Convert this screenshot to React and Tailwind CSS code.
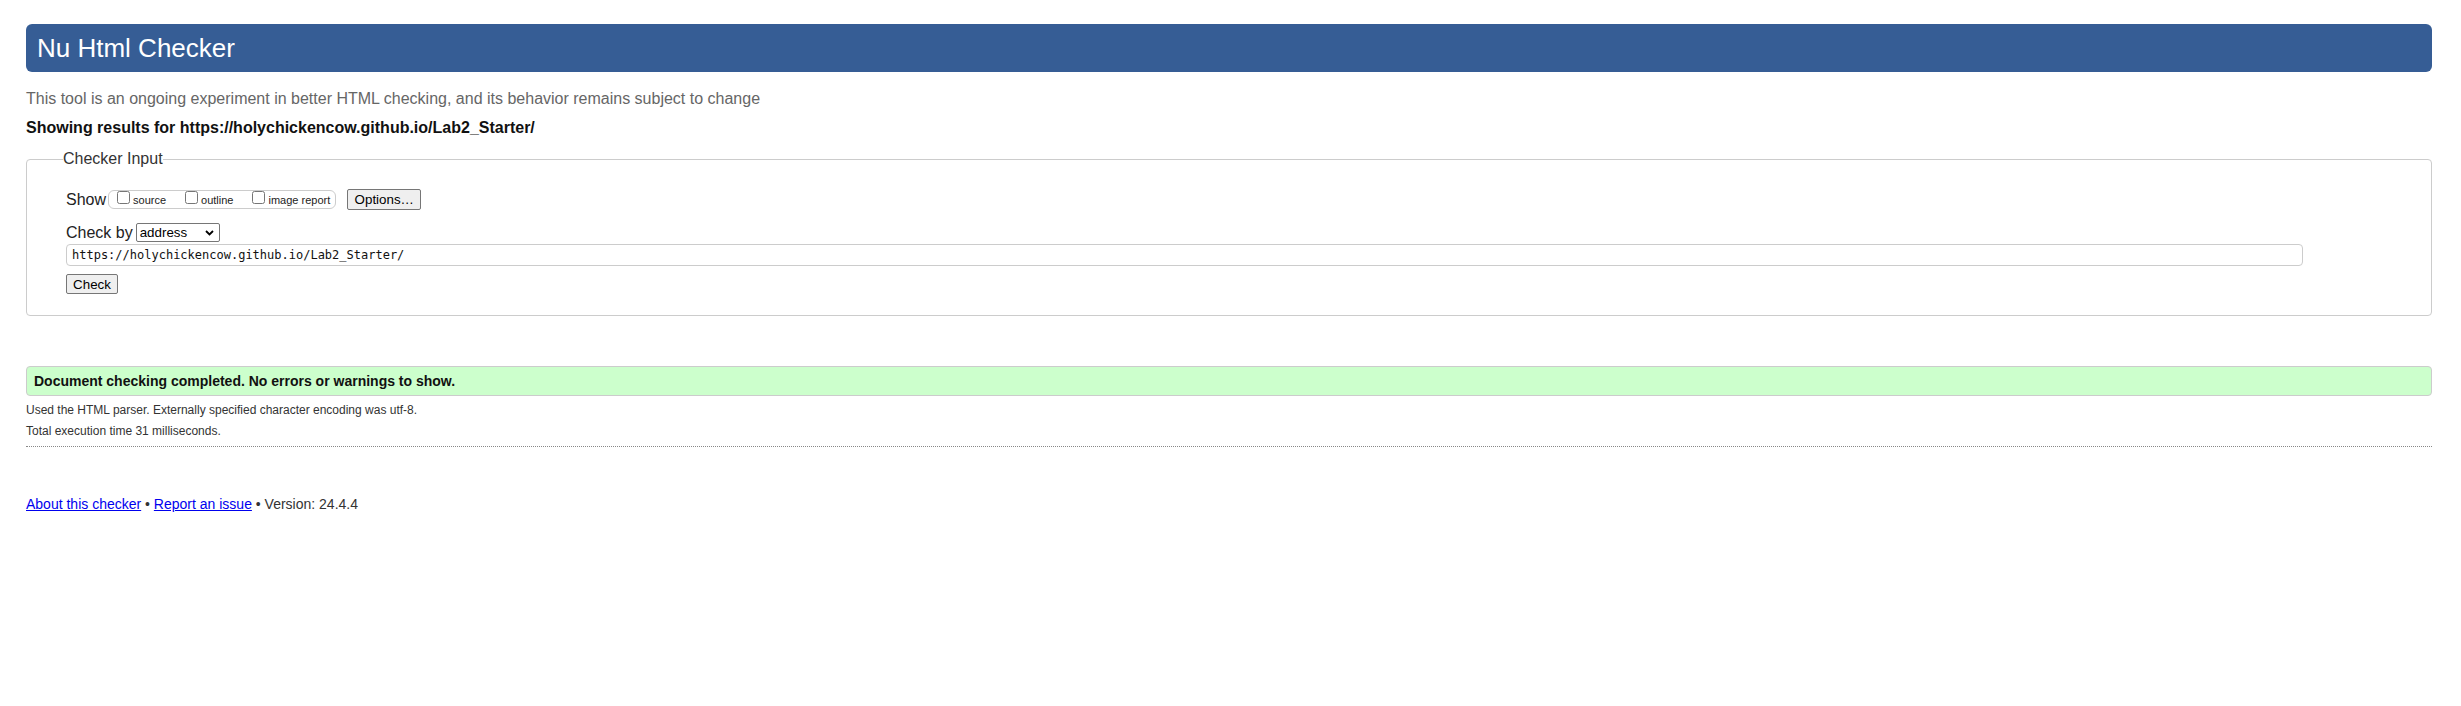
import React from "react";

function Cb({ label, className = "" }) {
  return (
    <label className={"flex items-start " + className}>
      <input type="checkbox" className="m-0 h-[13px] w-[13px]" />
      <span className="ml-[3px] pt-[4px] text-[11px] leading-[11px] text-[#222]">{label}</span>
    </label>
  );
}

export default function App() {
  return (
    <div className="min-h-[706px] bg-white pt-[24px] pl-[26px] pr-[29px] font-['Liberation_Sans',Arial,sans-serif] text-[16px] text-[#222]">
      <h1 className="flex h-[48px] items-center rounded-[6px] bg-[#365d95] pl-[11px] text-[26px] font-normal leading-[30px] text-white">
        Nu Html Checker
      </h1>
      <p className="mt-[18px] text-[16px] leading-[18px] text-[#666]">
        This tool is an ongoing experiment in better HTML checking, and its behavior remains subject to change
      </p>
      <p className="mt-[11px] text-[16px] font-bold leading-[18px] text-[#111]">
        Showing results for https://holychickencow.github.io/Lab2_Starter/
      </p>
      <fieldset className="mt-[13px] rounded-[4px] border border-[#cccccc] pt-[21px] pb-[21px] pl-[39px] pr-[39px]">
        <legend className="ml-[-3px] p-0 text-[16px] leading-[18px] text-[#333]">Checker Input</legend>
        <div className="flex h-[21px] items-center">
          <span className="leading-[18px] text-[#222]">Show</span>
          <div className="ml-[2px] flex h-[19px] items-start rounded-[6px] border border-[#cccccc] pl-[8px] pr-[5px]">
            <Cb label="source" />
            <Cb label="outline" className="ml-[19px]" />
            <Cb label="image report" className="ml-[19px]" />
          </div>
          <button className="ml-[11px] flex h-[21px] w-[74px] items-center justify-center rounded-[2px] border border-[#767676] bg-[#efefef] text-[13.333px] leading-[15px] text-black">
            Options…
          </button>
        </div>
        <div className="mt-[13px] flex h-[19px] items-center">
          <span className="leading-[18px] text-[#222]">Check by</span>
          <div className="ml-[3px] flex h-[19px] w-[84px] items-center justify-between rounded-[2px] border border-[#767676] bg-white pl-[3px] pr-[5px] text-[13.333px] leading-[15px] text-black">
            <span>address</span>
            <svg width="9" height="6" viewBox="0 0 9 6" fill="none">
              <path d="M1 1 L4.5 4.5 L8 1" stroke="#000" strokeWidth="1.8" />
            </svg>
          </div>
        </div>
        <div className="mt-[2px] flex h-[22px] w-[2237px] items-center rounded-[4px] border border-[#cccccc] pl-[5px] font-['DejaVu_Sans_Mono',monospace] text-[12px] leading-[14px] text-[#111]">
          https://holychickencow.github.io/Lab2_Starter/
        </div>
        <button className="mt-[8px] flex h-[20px] w-[52px] items-center justify-center rounded-[2px] border border-[#767676] bg-[#efefef] text-[13.333px] leading-[15px] text-black">
          Check
        </button>
      </fieldset>
      <div className="mt-[50px] flex h-[30px] items-center rounded-[4px] border border-[#cccccc] bg-[#ccffcc] pl-[7px] text-[14px] font-bold leading-[16px] text-[#111]">
        Document checking completed. No errors or warnings to show.
      </div>
      <p className="mt-[7px] text-[12px] leading-[14px] text-[#333]">
        Used the HTML parser. Externally specified character encoding was utf-8.
      </p>
      <p className="mt-[7px] text-[12px] leading-[14px] text-[#333]">Total execution time 31 milliseconds.</p>
      <hr className="mt-[8px] border-0 border-t border-dotted border-[#888]" />
      <p className="mt-[49px] text-[14px] leading-[16px] text-[#333]">
        <a href="#" className="text-[#0000ee] underline">About this checker</a>
        {" • "}
        <a href="#" className="text-[#0000ee] underline">Report an issue</a>
        {" • Version: 24.4.4"}
      </p>
    </div>
  );
}
